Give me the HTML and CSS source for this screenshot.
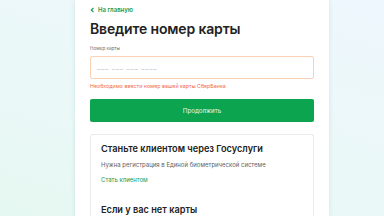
FILE: index.html
```html
<!DOCTYPE html>
<html lang="ru">
<head>
<meta charset="utf-8">
<link rel="stylesheet" href="styles.css">
</head>
<body>
<div class="page">
  <main class="card">
    <a class="back" href="#">
      <svg class="chev" width="5" height="6" viewBox="0 0 5 6"><path d="M3.5 0.8 L1.3 3 L3.5 5.2" fill="none" stroke="#1a9a4a" stroke-width="1.2"/></svg>
      <span>На главную</span>
    </a>
    <h1 class="title">Введите номер карты</h1>
    <label class="label">Номер карты</label>
    <div class="input"><span class="ph">___ ___ ___ ____</span></div>
    <div class="error">Необходимо ввести номер вашей карты СберБанка</div>
    <button class="btn">Продолжить</button>
    <section class="box">
      <h2 class="box-title">Станьте клиентом через Госуслуги</h2>
      <p class="box-text">Нужна регистрация в Единой биометрической системе</p>
      <a class="box-link" href="#">Стать клиентом</a>
      <h2 class="box-title second">Если у вас нет карты</h2>
    </section>
  </main>
</div>
</body>
</html>
```
FILE: styles.css
```css
html, body {
  margin: 0;
  padding: 0;
  width: 384px;
  height: 216px;
  overflow: hidden;
}
body {
  font-family: Inter, "Noto Sans", sans-serif;
  background: linear-gradient(200deg, #eef7fd 0%, #ebf8f8 50%, #e6f8f2 100%);
}
.page {
  display: flex;
  justify-content: center;
  height: 216px;
}
.card {
  width: 224px;
  margin-left: 20px;
  background: #fff;
  padding: 6px 15px 0 15px;
  box-shadow: 0 0 4px rgba(160, 190, 200, 0.35);
  display: flex;
  flex-direction: column;
}
.back {
  display: flex;
  align-items: center;
  gap: 3px;
  color: #1a9a4a;
  text-decoration: none;
  font-size: 6px;
  font-weight: 600;
  height: 8px;
}
.title {
  margin: 7px 0 0 0;
  font-size: 14px;
  font-weight: 600;
  color: #222;
  line-height: 17px;
  letter-spacing: -0.15px;
}
.label {
  margin-top: 9px;
  font-size: 4.6px;
  color: #6d6f73;
  line-height: 6px;
}
.input {
  margin-top: 4px;
  height: 21px;
  border: 1px solid #fbd0b3;
  border-radius: 2px;
  display: flex;
  align-items: center;
  padding-left: 6px;
  flex-shrink: 0;
}
.ph {
  font-size: 7.5px;
  color: #c4c6c9;
  letter-spacing: 0.6px;
  position: relative;
  top: -1px;
}
.error {
  margin-top: 4px;
  font-size: 5.3px;
  color: #f26a4b;
  line-height: 6px;
}
.btn {
  margin-top: 10px;
  height: 23px;
  flex-shrink: 0;
  border: 0;
  border-radius: 2px;
  background: #0ca44f;
  color: #e9f7ee;
  font-family: inherit;
  font-size: 6.2px;
  padding: 0;
}
.box {
  margin-top: 12px;
  border: 1px solid #e8eaec;
  border-bottom: 0;
  border-radius: 3px 3px 0 0;
  padding: 8px 10px 0 10px;
  flex: 1;
}
.box-title {
  margin: 0;
  font-size: 9.2px;
  font-weight: 600;
  color: #222;
  line-height: 12px;
}
.box-title.second {
  margin-top: 20px;
}
.box-text {
  margin: 6px 0 0 0;
  font-size: 6px;
  color: #5d5f63;
  line-height: 8px;
}
.box-link {
  display: block;
  margin-top: 7px;
  font-size: 6px;
  color: #1a9a4a;
  text-decoration: none;
  line-height: 8px;
}
```
